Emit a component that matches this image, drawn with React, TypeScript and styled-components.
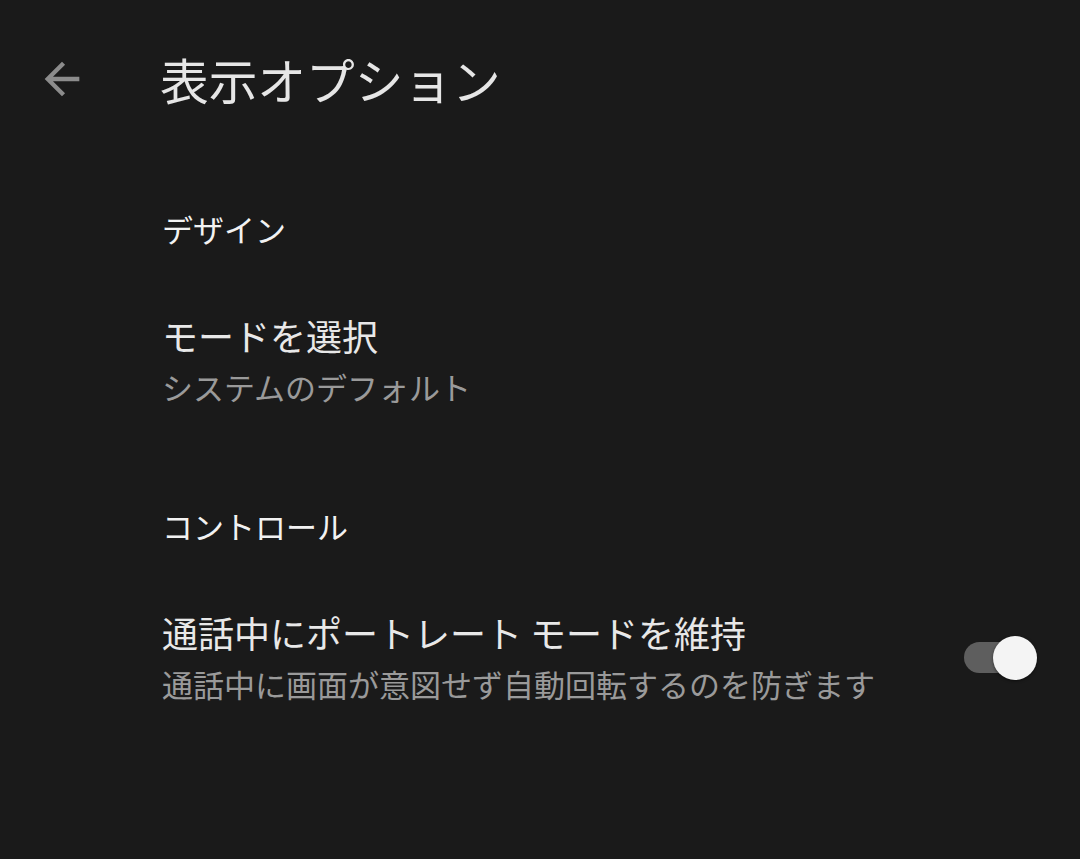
import styled, { createGlobalStyle } from "styled-components";

const GlobalStyle = createGlobalStyle`
  html, body {
    margin: 0;
    padding: 0;
    background: #1a1a1a;
  }
  body {
    font-family: "Noto Sans CJK JP", "Noto Sans", sans-serif;
    color: #e8e8e8;
  }
`;

const Page = styled.div`
  min-height: 859px;
  background: #1a1a1a;
`;

const Header = styled.header`
  height: 158px;
  display: flex;
  align-items: center;
`;

const BackButton = styled.button`
  width: 52px;
  height: 52px;
  margin-left: 36px;
  margin-right: 72px;
  padding: 0;
  border: none;
  background: none;
  color: #8c8c8c;
  display: flex;
  align-items: center;
  justify-content: center;
  svg {
    width: 52px;
    height: 52px;
  }
`;

const Title = styled.h1`
  margin: 0;
  font-size: 48.7px;
  font-weight: 400;
  line-height: 64px;
  color: #e6e6e6;
`;

const Content = styled.main`
  padding-left: 162px;
  padding-right: 43px;
`;

const SectionTitle = styled.h2<{ $gap: number }>`
  margin: ${(p) => p.$gap}px 0 0;
  font-size: 31px;
  font-weight: 400;
  line-height: 40px;
  color: #f2f2f2;
`;

const Item = styled.div`
  margin-top: 62px;
  display: flex;
  align-items: center;
  gap: 24px;
`;

const ItemText = styled.div`
  flex: 1;
  display: flex;
  flex-direction: column;
  gap: 8px;
`;

const ItemTitle = styled.div`
  font-size: 36px;
  line-height: 48px;
  color: #e8e8e8;
`;

const ItemSummary = styled.div`
  font-size: 31px;
  line-height: 40px;
  color: #9a9a9a;
`;

const Switch = styled.div`
  position: relative;
  width: 73px;
  height: 44px;
  margin-top: 3px;
  flex-shrink: 0;
`;

const Track = styled.span`
  position: absolute;
  left: 0;
  top: 6.5px;
  width: 66px;
  height: 31px;
  border-radius: 16px;
  background: #5e5e5e;
`;

const Thumb = styled.span<{ $on: boolean }>`
  position: absolute;
  top: 0;
  left: ${(p) => (p.$on ? 29 : 0)}px;
  width: 44px;
  height: 44px;
  border-radius: 50%;
  background: #f4f4f4;
  box-shadow: 0 1px 3px rgba(0, 0, 0, 0.5);
`;

function Toggle({ on }: { on: boolean }) {
  return (
    <Switch>
      <Track />
      <Thumb $on={on} />
    </Switch>
  );
}

export default function App() {
  return (
    <Page>
      <GlobalStyle />
      <Header>
        <BackButton aria-label="戻る">
          <svg viewBox="0 0 24 24" fill="currentColor">
            <path d="M20 11H7.83l5.59-5.59L12 4l-8 8 8 8 1.41-1.41L7.83 13H20v-2z" />
          </svg>
        </BackButton>
        <Title>表示オプション</Title>
      </Header>
      <Content>
        <SectionTitle $gap={51}>デザイン</SectionTitle>
        <Item>
          <ItemText>
            <ItemTitle>モードを選択</ItemTitle>
            <ItemSummary>システムのデフォルト</ItemSummary>
          </ItemText>
        </Item>
        <SectionTitle $gap={99}>コントロール</SectionTitle>
        <Item>
          <ItemText>
            <ItemTitle>通話中にポートレート モードを維持</ItemTitle>
            <ItemSummary>通話中に画面が意図せず自動回転するのを防ぎます</ItemSummary>
          </ItemText>
          <Toggle on />
        </Item>
      </Content>
    </Page>
  );
}
